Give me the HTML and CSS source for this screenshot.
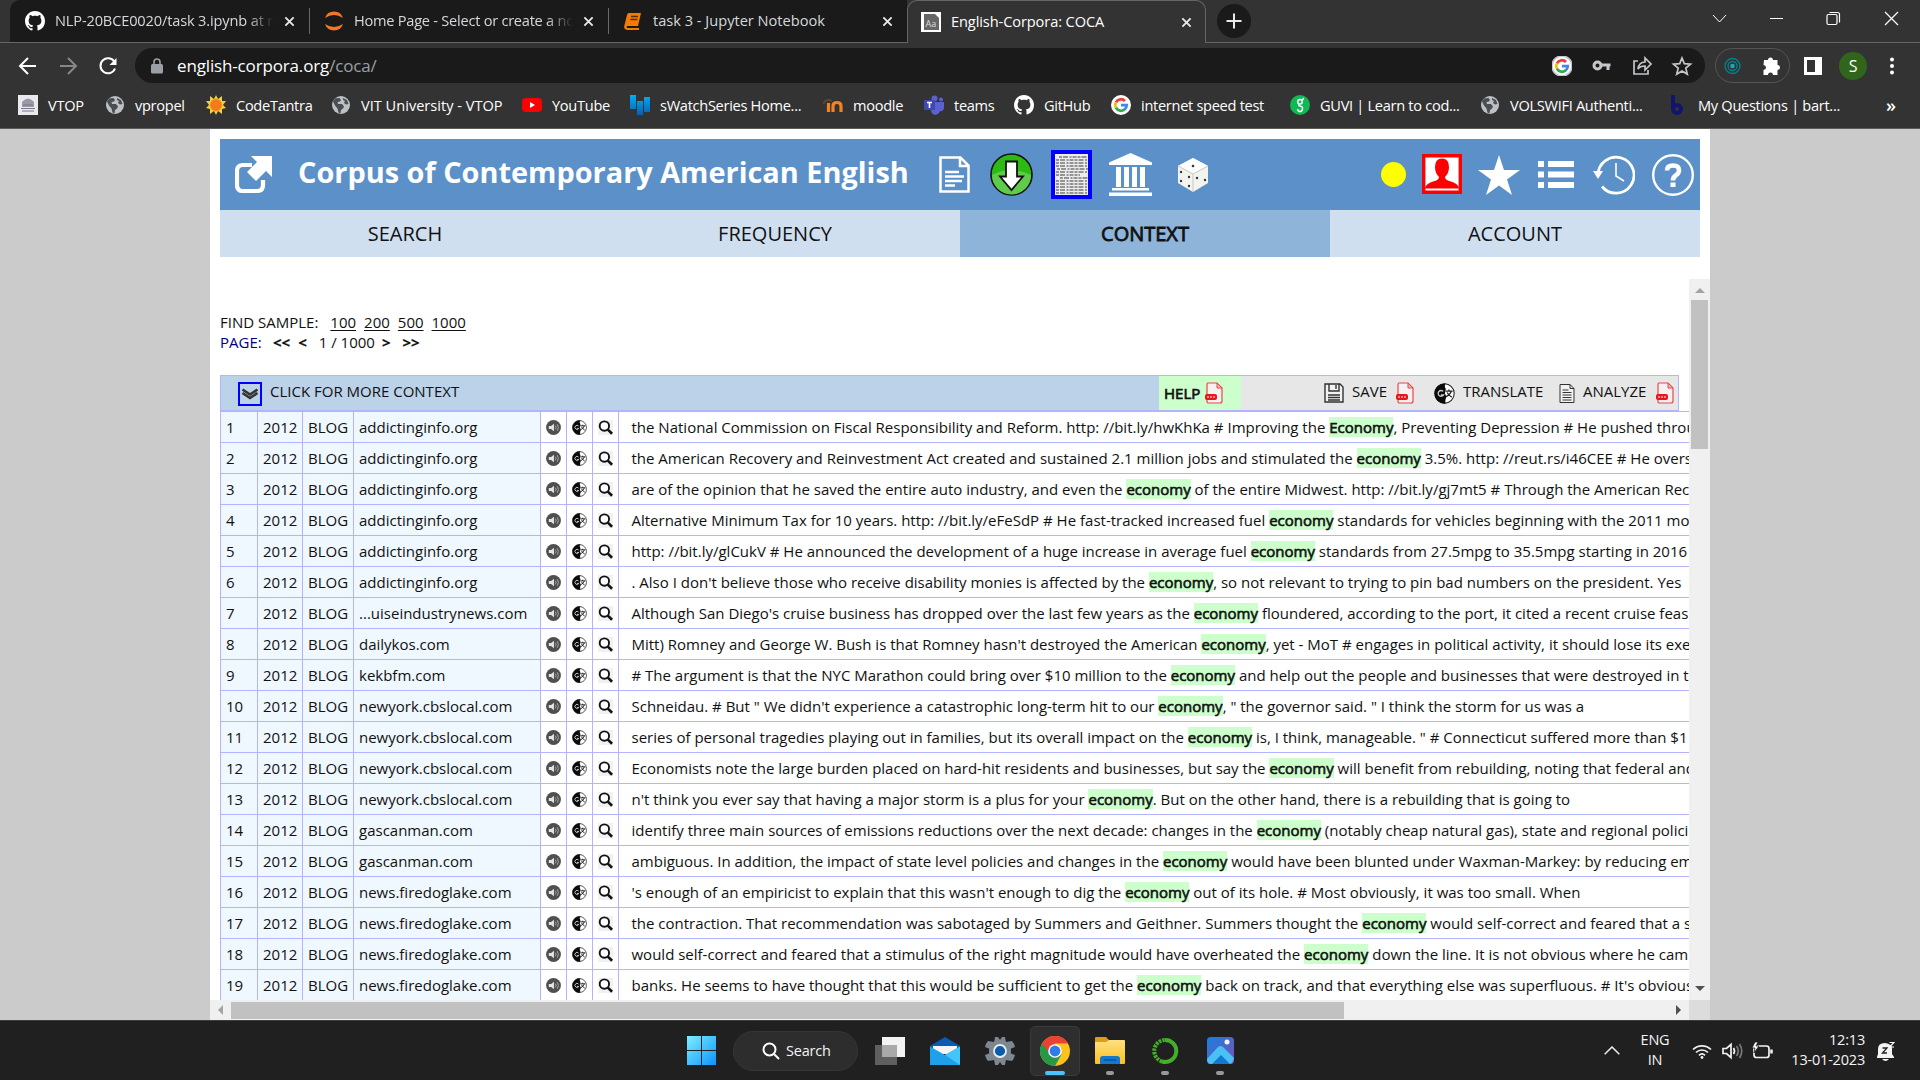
FILE: index.html
```html
<!DOCTYPE html>
<html lang="en">
<head>
<meta charset="utf-8">
<title>English-Corpora: COCA</title>
<link rel="stylesheet" href="styles.css">
</head>
<body>
<svg class="defs" width="0" height="0">
  <defs>
    <linearGradient id="winG" x1="0" y1="0" x2="1" y2="1"><stop offset="0" stop-color="#7df0ff"/><stop offset="1" stop-color="#0c93ff"/></linearGradient>
    <linearGradient id="barG" x1="0" y1="0" x2="0" y2="1"><stop offset="0" stop-color="#00aef5"/><stop offset="1" stop-color="#0b5fb0"/></linearGradient>
    <linearGradient id="foldG" x1="0" y1="0" x2="0" y2="1"><stop offset="0" stop-color="#ffe083"/><stop offset="1" stop-color="#fcc01c"/></linearGradient>
    <linearGradient id="photoG" x1="0" y1="0" x2="1" y2="1"><stop offset="0" stop-color="#1681dd"/><stop offset="1" stop-color="#7d4fb5"/></linearGradient>
  </defs>
  <symbol id="github" viewBox="0 0 16 16"><path fill="#fff" d="M8 0C3.58 0 0 3.58 0 8c0 3.54 2.29 6.53 5.47 7.59.4.07.55-.17.55-.38 0-.19-.01-.82-.01-1.49-2.01.37-2.53-.49-2.69-.94-.09-.23-.48-.94-.82-1.13-.28-.15-.68-.52-.01-.53.63-.01 1.08.58 1.23.82.72 1.21 1.87.87 2.33.66.07-.52.28-.87.51-1.07-1.78-.2-3.64-.89-3.64-3.95 0-.87.31-1.59.82-2.15-.08-.2-.36-1.02.08-2.12 0 0 .67-.21 2.2.82.64-.18 1.32-.27 2-.27s1.36.09 2 .27c1.53-1.04 2.2-.82 2.2-.82.44 1.1.16 1.92.08 2.12.51.56.82 1.27.82 2.15 0 3.07-1.87 3.75-3.65 3.95.29.25.54.73.54 1.48 0 1.07-.01 1.93-.01 2.2 0 .21.15.46.55.38A8.01 8.01 0 0 0 16 8c0-4.42-3.58-8-8-8z"/></symbol>
  <symbol id="globe" viewBox="0 0 20 20"><circle cx="10" cy="10" r="9" fill="#bdc1c6"/><path fill="#4a4d51" d="M4 3.500 8.500 3l1.500 2-1 1.500-2.500.5L7 9h4l2 2.500-1 2-2 1.500-.5 3.500-2-1-1-4-2.500-3L2 6.500zM12 3l4 2 1.500 4-2.500.5-2-1.500 1-2-2-1z"/></symbol>
  <symbol id="google" viewBox="0 0 20 20"><circle cx="10" cy="10" r="10" fill="#fff"/><g fill="none" stroke-width="2.800"><path stroke="#ea4335" d="M4.900 7.300A5.700 5.700 0 0 1 14 6"/><path stroke="#fbbc05" d="M4.900 12.700a5.700 5.700 0 0 1 0-5.400"/><path stroke="#34a853" d="M4.900 12.700A5.700 5.700 0 0 0 14 14.100"/><path stroke="#4285f4" d="M10 10.200h5.700a5.700 5.700 0 0 1-1.900 4"/></g></symbol>
  <symbol id="x" viewBox="0 0 12 12"><path stroke="#e8eaed" stroke-width="2" d="m1.500 1.500 9 9m0-9-9 9"/></symbol>
  <symbol id="snd" viewBox="0 0 16 16"><circle cx="8" cy="8" r="7.900" fill="#4f4f4f"/><path fill="#e4e4e4" d="M3 6.500h2.500L8.500 4v8L5.500 9.500H3z"/><path fill="none" stroke="#aaa" d="M10 6q1.500 2 0 4m2-5.500q2.500 3.500 0 7"/></symbol>
  <symbol id="gt" viewBox="0 0 16 16"><circle cx="8" cy="8" r="7.400" fill="#fff" stroke="#222" stroke-width=".8"/><path fill="#0a0a0a" d="M9 .4A7.700 7.700 0 1 0 9 15.700q-1-2 .5-5.200L8.300 8l.7-3.500Q7.500 2 9 .4z"/><path fill="none" stroke="#ccc" d="M7 6.400a2.200 2.200 0 1 0 .3 2.600H5.300"/><path fill="none" stroke="#222" stroke-width="1" d="M8.800 6.200h5.400m-2.800-1.200v1.200m1.800 0q-1 3-4 4.200m.8-3.200q1 2 3.600 3.600"/></symbol>
  <symbol id="mag" viewBox="0 0 16 16"><path fill="#f1f1f1" d="M0 0h16v16H0z"/><circle cx="6.800" cy="6.500" r="5" fill="#fff" stroke="#111" stroke-width="2"/><path stroke="#111" stroke-width="2.800" d="m10.500 10.300 4.500 4.400"/></symbol>
  <symbol id="pdf" viewBox="0 0 18 22"><path fill="#f6f1f1" stroke="#e84848" stroke-width="1.200" d="M3 1h9l5 5v13q0 2-2 2H3q-1 0-1-2V3q0-2 1-2z"/><path fill="#f3b7b7" stroke="#e84848" d="M12 1v5h5z"/><rect y="12" width="12" height="6" rx="2" fill="#e8151b"/><path stroke="#fff" stroke-width="1" stroke-dasharray="2 1" d="M2 15h8"/></symbol>
</svg>

<div class="browser">
  <div class="tabs">
    <div class="tab"><svg class="ico"><use href="#github"/></svg><span class="tt t1 fade">NLP-20BCE0020/task 3.ipynb at r</span><svg class="cl"><use href="#x"/></svg></div>
    <div class="tab sep"><svg class="ico" viewBox="0 0 20 20"><path fill="#f37726" d="M1 7a9.500 9.500 0 0 1 18 0Q10 1 1 7zM1 13a9.500 9.500 0 0 0 18 0Q10 19 1 13z"/></svg><span class="tt t2 fade">Home Page - Select or create a no</span><svg class="cl"><use href="#x"/></svg></div>
    <div class="tab sep"><svg class="ico" viewBox="0 0 20 20"><path fill="#f57c00" d="M6 2h12l-3 13H4q-1 2 1 2h11v2H4q-4-1-2.500-5L4 4q.5-2 2-2z"/><path stroke="#5a2d00" stroke-width="1.300" d="M8 5.500h7M7.300 8.500h7"/></svg><span class="tt t3">task 3 - Jupyter Notebook</span><svg class="cl"><use href="#x"/></svg></div>
    <div class="tab active"><svg class="ico" viewBox="0 0 20 20"><path fill="#fff" d="M0 0h20v20H0z"/><path fill="#666" d="M3 2h11l4 4v12H3z"/><text x="4.500" y="14.500" class="aa">Aa</text></svg><span class="tt t4">English-Corpora: COCA</span><svg class="cl"><use href="#x"/></svg></div>
    <div class="newtab"><svg width="16" height="16" viewBox="0 0 16 16"><path stroke="#e8eaed" stroke-width="2" d="M8 .5v15M.5 8h15"/></svg></div>
    <svg class="winbtns" width="190" height="20" viewBox="0 0 190 20" fill="none" stroke="#fff" stroke-width="1.200"><path d="m1 6 6.500 7L14 6M58 9.500h13" stroke-width="1"/><rect x="115" y="5.500" width="10" height="10" rx="1.500"/><path d="M117.500 3.500h8q2 0 2 2v8M173 3l13 13m0-13-13 13"/></svg>
  </div>
  <div class="toolbar">
    <svg class="navs" width="100" height="20" viewBox="0 0 100 20" fill="none" stroke-width="2"><path stroke="#fff" d="M18 10H2m8-8-8 8 8 8"/><path stroke="#85878a" d="M42 10h16m-8-8 8 8-8 8"/><path stroke="#fff" d="M96.500 6A7.500 7.500 0 1 0 97 12.500"/><path fill="#fff" d="M98.500 2v7h-7z"/></svg>
    <div class="omni">
      <svg width="12" height="16" viewBox="0 0 12 16"><path fill="#9aa0a6" d="M1.500 6h9Q12 6 12 7.500v6.500q0 1.500-1.500 1.500h-9Q0 15.500 0 14V7.500Q0 6 1.500 6z"/><path fill="none" stroke="#9aa0a6" stroke-width="1.600" d="M3 7V4a3 3 0 0 1 6 0v3"/></svg>
      <span class="url">english-corpora.org<i>/coca/</i></span>
      <svg class="oi" width="142" height="20" viewBox="0 0 142 20" fill="none" stroke="#c4c7ca" stroke-width="1.700"><use href="#google" width="20" height="20"/><circle cx="45.500" cy="9.500" r="3.500" stroke-width="3"/><path stroke-width="3" d="M49 9h9.500m-2.500 0v5"/><path d="M86 5h-4v13h14v-4m-10-1q1-7 7-7V2l6 6-6 6v-4q-5 0-7 3z"/><path d="m130 2 2.300 5.600 6.200.5-4.700 4 1.500 6-5.300-3.200-5.300 3.200 1.500-6-4.700-4 6.200-.5z"/></svg>
    </div>
    <div class="ext"><svg width="60" height="20" viewBox="0 0 60 20"><g fill="none" stroke="#00838f" stroke-width="1.300"><circle cx="9.500" cy="10" r="7.500"/><circle cx="9.500" cy="10" r="4.500"/></g><circle cx="9.500" cy="10" r="2.300" fill="#19a9b5"/><path fill="#fff" d="M41 4h4a2.500 2.500 0 1 1 5 0h4.500v5a2.500 2.500 0 1 1 0 5v5H50a2.500 2.500 0 0 0-5 0h-4.500v-5a2.500 2.500 0 0 0 0-5z"/></svg></div>
    <svg class="panel" width="18" height="18" viewBox="0 0 18 18"><path fill="#fff" fill-rule="evenodd" d="M0 0h18v18H0zM3 3v12h8V3z"/></svg>
    <span class="avatar">S</span>
    <svg class="dots" width="6" height="18" viewBox="0 0 6 18" fill="#fff"><circle cx="3" cy="2.500" r="2"/><circle cx="3" cy="9" r="2"/><circle cx="3" cy="15.500" r="2"/></svg>
  </div>
  <div class="marks">
    <div><svg viewBox="0 0 20 20"><path fill="#e9e9ee" d="M0 0h20v20H0z"/><path fill="#9a9aa6" d="M4 7q6-7 12 0v5H4z"/><path stroke="#77778a" d="M3 13.500h14M4 16h12M5 10h10"/></svg><span>VTOP</span></div>
    <div><svg><use href="#globe"/></svg><span>vpropel</span></div>
    <div><svg viewBox="0 0 20 20"><path fill="#f0d040" d="m10 0 2 4 4-3v5l4 0-3 4 3 3-4 1v5l-4-3-2 4-2-4-4 3v-5l-4-1 3-3-3-4h4V1l4 3z"/><circle cx="10" cy="10" r="6" fill="#f57a1c"/></svg><span>CodeTantra</span></div>
    <div><svg><use href="#globe"/></svg><span class="wide">VIT University - VTOP</span></div>
    <div><svg viewBox="0 0 20 20"><rect y="3" width="20" height="14" rx="4" fill="#f00"/><path fill="#fff" d="m8 7 5 3-5 3z"/></svg><span>YouTube</span></div>
    <div><svg viewBox="0 0 20 20" fill="url(#barG)"><path d="M0 0h6v14H0zM7 6h6v14H7zM14 2h6v15h-6z"/></svg><span>sWatchSeries Home...</span></div>
    <div><svg viewBox="0 0 20 20" fill="none"><path stroke="#f58220" stroke-width="3.200" d="M5.500 8v9M10 17v-6q0-3.500 4-3.500t4 3.500v6"/><path stroke="#5b4636" stroke-width="2" d="M0 9q3-6 9-3"/></svg><span>moodle</span></div>
    <div><svg viewBox="0 0 20 20"><g fill="#5b62d0"><circle cx="10.500" cy="3.500" r="3"/><circle cx="17" cy="4.500" r="2"/><path d="M8 7h12v6q-1 4-4 3-1 3.500-5 4-4-1-4-5z"/></g><path fill="#3f48b5" d="M0 5h11v10H0z"/><path stroke="#fff" stroke-width="1.600" d="M3 7.500h5M5.500 7v6"/></svg><span>teams</span></div>
    <div><svg><use href="#github"/></svg><span>GitHub</span></div>
    <div><svg><use href="#google"/></svg><span>internet speed test</span></div>
    <div><svg viewBox="0 0 20 20"><circle cx="10" cy="10" r="10" fill="#0fb954"/><g fill="none" stroke="#fff" stroke-width="1.500"><circle cx="10" cy="6.800" r="2.300"/><path d="M12 5q2-1 1-2M9 9q-1 1.500 1 2 3 .5 2.500 3T10 16.500 7.500 14"/></g></svg><span>GUVI | Learn to cod...</span></div>
    <div><svg><use href="#globe"/></svg><span>VOLSWIFI Authenti...</span></div>
    <div><svg viewBox="0 0 20 20" fill="none" stroke="#131370" stroke-width="4"><path d="M3 1h2v14"/><ellipse cx="9" cy="14" rx="4" ry="4"/></svg><span>My Questions | bart...</span></div>
    <b>»</b>
  </div>
</div>

<div class="page">
  <header>
    <svg class="h-link" width="37" height="37" viewBox="0 0 37 37"><path fill="none" stroke="#fff" stroke-width="4.200" d="M17 9H8q-6 0-6 6v14q0 6 6 6h14q6 0 6-6v-5"/><path fill="#fff" d="M16 0h21v21l-6-6-10 10-9-9L22 6z"/></svg>
    <h1>Corpus of Contemporary American English</h1>
    <svg class="h-doc" width="31" height="37" viewBox="0 0 31 37" fill="none" stroke="#fff" stroke-width="2.500"><path d="M1.500 1.500h20l8 8v26h-28zM21 1.500V10h8M6 16h14M6 20.500h19M6 25h17M6 29.500h10"/></svg>
    <svg class="h-down" width="43" height="43" viewBox="0 0 43 43"><circle cx="21.500" cy="21.500" r="20.500" fill="#2bbb12" stroke="#111" stroke-width="1.600"/><path fill="#5ecb4a" d="M2 22q19-10 39 0a19.500 19.500 0 0 1-39 0z"/><path fill="#fff" stroke="#111" stroke-width="1.800" d="M16 8.500h11v15h6L21.500 37 10 23.500h6z"/></svg>
    <svg class="h-news" width="41" height="49" viewBox="0 0 41 49"><path fill="#ececec" d="M2 2h37v45H2z"/><path stroke="#777" stroke-width="1.300" stroke-dasharray="3 1 5 1.500 2 1 4 1" d="M8 7h29M5 10h31M5 13h32M5 16h31M6 19h31M5 22h32M5 25h24M9 28h28M5 31h32M5 34h31M5 37h32M5 40h31M5 43h32"/><path fill="none" stroke="#00f" stroke-width="4" d="M2 2h37v45H2z"/></svg>
    <svg class="h-bank" width="43" height="43" viewBox="0 0 43 43" fill="#fff"><path d="M21.500 0 43 9.500V12H0V9.500zM7 14h5v20H7zm8 0h5v20h-5zm8 0h5v20h-5zm8 0h5v20h-5zM3 35h37v2.500H3zM0 39.500h43V43H0z"/></svg>
    <svg class="h-dice" width="32" height="34" viewBox="0 0 32 34"><path fill="#f4f4ee" d="M16 0 31 8v17L16 34 1 25V8z"/><path fill="#fff" d="M16 0 31 8l-15 8L1 8z"/><path fill="none" stroke="#c8c8bc" d="m1 8 15 8 15-8M16 16v18"/><g fill="#334"><circle cx="16" cy="8" r="1.300"/><circle cx="4" cy="14" r="1.200"/><circle cx="12" cy="19" r="1.200"/><circle cx="4" cy="23" r="1.200"/><circle cx="12" cy="28" r="1.200"/><circle cx="20" cy="20" r="1.200"/><circle cx="28" cy="22" r="1.200"/></g></svg>
    <i class="h-dot"></i>
    <svg class="h-user" width="40" height="40" viewBox="0 0 40 40"><path fill="#fff" stroke="red" stroke-width="3.400" d="M1.700 1.700h36.600v36.600H1.700z"/><path fill="red" d="M13 13q0-8.500 7-8.500T27 13q0 6-4 10 0 3 6 4.500 7 2 8 6.500v.5H3V34q1-4.500 8-6.500 6-1.500 6-4.500-4-4-4-10z"/></svg>
    <svg class="h-star" width="42" height="40" viewBox="0 0 42 40"><path fill="#fff" d="m21 0 5 15h16L29 24.500 34 40 21 30.500 8 40l5-15.500L0 15h16z"/></svg>
    <svg class="h-list" width="36" height="27" viewBox="0 0 36 27" fill="#fff"><path d="M0 0h6v6H0zm10 0h26v6H10zM0 10.500h6v6H0zm10 0h26v6H10zM0 21h6v6H0zm10 0h26v6H10z"/></svg>
    <svg class="h-hist" width="42" height="40" viewBox="0 0 42 40"><path fill="none" stroke="#fff" stroke-width="2.800" d="M5 20a18 18 0 1 1 4 11.500"/><path fill="#fff" d="M0 16h10l-5 8z"/><path fill="none" stroke="#fff" stroke-width="1.600" d="M23 8v13l8 5"/></svg>
    <svg class="h-help" width="42" height="42" viewBox="0 0 42 42" fill="none" stroke="#fff"><circle cx="21" cy="21" r="19.800" stroke-width="2.400"/><path stroke-width="4.600" d="M15 16.500q0-5 6-5t6 4.700q0 3-3 5Q21 23 21 26.500"/><path fill="#fff" stroke="none" d="M18.500 28.500h5v4.500h-5z"/></svg>
  </header>
  <nav><span>SEARCH</span><span>FREQUENCY</span><span class="on">CONTEXT</span><span>ACCOUNT</span></nav>
  <div class="frame">
    <div class="view">
      <div class="sample">FIND SAMPLE: <u>100</u><u>200</u><u>500</u><u>1000</u></div>
      <div class="pager"><em>PAGE:</em><b>&lt;&lt;</b><b>&lt;</b><span>1 / 1000</span><b>&gt;</b><b class="last">&gt;&gt;</b></div>
      <div class="thead">
        <div class="more"><svg width="24" height="24" viewBox="0 0 24 24"><path fill="none" stroke="#00f" stroke-width="2" d="M1 1h22v22H1z"/><path fill="none" stroke="#333" stroke-width="2.600" d="m4.500 7.500 7.500 5 7.500-5M4.500 11l7.500 5 7.500-5"/></svg><span>CLICK FOR MORE CONTEXT</span></div>
        <div class="help"><b>HELP</b><svg width="18" height="22"><use href="#pdf"/></svg></div>
        <div class="tools">
          <svg class="a" width="20" height="20" viewBox="0 0 20 20"><path fill="#f2f2f2" stroke="#333" stroke-width="1.400" d="M1 1h15l3 3v15H1z"/><path fill="none" stroke="#333" stroke-width="1.400" d="M5 1v7h10V1m-3 1v4M4 12h12M4 14.500h12M4 17h12"/></svg><span class="s">SAVE</span><svg class="p1" width="18" height="22"><use href="#pdf"/></svg>
          <svg class="t" width="21" height="21"><use href="#gt"/></svg><span class="s s2">TRANSLATE</span>
          <svg class="d" width="16" height="19" viewBox="0 0 16 19"><path fill="#f2f2f2" stroke="#333" d="M1 .5h10l4 4v14H1zM11 .5v4h4M3.500 6h6M3.500 8.500h9M3.500 11h9M3.500 13.500h9M3.500 16h9"/></svg><span class="s s3">ANALYZE</span><svg width="18" height="22"><use href="#pdf"/></svg>
        </div>
      </div>
      <div class="rows">
<div><i>1</i><i>2012</i><i>BLOG</i><i>addictinginfo.org</i><s><svg><use href="#snd"/></svg></s><s><svg><use href="#gt"/></svg></s><s><svg><use href="#mag"/></svg></s><p>the National Commission on Fiscal Responsibility and Reform. http: //bit.ly/hwKhKa # Improving the <b>Economy</b>, Preventing Depression # He pushed through</p></div>
<div><i>2</i><i>2012</i><i>BLOG</i><i>addictinginfo.org</i><s><svg><use href="#snd"/></svg></s><s><svg><use href="#gt"/></svg></s><s><svg><use href="#mag"/></svg></s><p>the American Recovery and Reinvestment Act created and sustained 2.1 million jobs and stimulated the <b>economy</b> 3.5%. http: //reut.rs/i46CEE # He oversaw</p></div>
<div><i>3</i><i>2012</i><i>BLOG</i><i>addictinginfo.org</i><s><svg><use href="#snd"/></svg></s><s><svg><use href="#gt"/></svg></s><s><svg><use href="#mag"/></svg></s><p>are of the opinion that he saved the entire auto industry, and even the <b>economy</b> of the entire Midwest. http: //bit.ly/gj7mt5 # Through the American Recovery</p></div>
<div><i>4</i><i>2012</i><i>BLOG</i><i>addictinginfo.org</i><s><svg><use href="#snd"/></svg></s><s><svg><use href="#gt"/></svg></s><s><svg><use href="#mag"/></svg></s><p>Alternative Minimum Tax for 10 years. http: //bit.ly/eFeSdP # He fast-tracked increased fuel <b>economy</b> standards for vehicles beginning with the 2011 model</p></div>
<div><i>5</i><i>2012</i><i>BLOG</i><i>addictinginfo.org</i><s><svg><use href="#snd"/></svg></s><s><svg><use href="#gt"/></svg></s><s><svg><use href="#mag"/></svg></s><p>http: //bit.ly/glCukV # He announced the development of a huge increase in average fuel <b>economy</b> standards from 27.5mpg to 35.5mpg starting in 2016</p></div>
<div><i>6</i><i>2012</i><i>BLOG</i><i>addictinginfo.org</i><s><svg><use href="#snd"/></svg></s><s><svg><use href="#gt"/></svg></s><s><svg><use href="#mag"/></svg></s><p>. Also I don't believe those who receive disability monies is affected by the <b>economy</b>, so not relevant to trying to pin bad numbers on the president. Yes</p></div>
<div><i>7</i><i>2012</i><i>BLOG</i><i>...uiseindustrynews.com</i><s><svg><use href="#snd"/></svg></s><s><svg><use href="#gt"/></svg></s><s><svg><use href="#mag"/></svg></s><p>Although San Diego's cruise business has dropped over the last few years as the <b>economy</b> floundered, according to the port, it cited a recent cruise feasibility</p></div>
<div><i>8</i><i>2012</i><i>BLOG</i><i>dailykos.com</i><s><svg><use href="#snd"/></svg></s><s><svg><use href="#gt"/></svg></s><s><svg><use href="#mag"/></svg></s><p>Mitt) Romney and George W. Bush is that Romney hasn't destroyed the American <b>economy</b>, yet - MoT # engages in political activity, it should lose its exemption</p></div>
<div><i>9</i><i>2012</i><i>BLOG</i><i>kekbfm.com</i><s><svg><use href="#snd"/></svg></s><s><svg><use href="#gt"/></svg></s><s><svg><use href="#mag"/></svg></s><p># The argument is that the NYC Marathon could bring over $10 million to the <b>economy</b> and help out the people and businesses that were destroyed in the</p></div>
<div><i>10</i><i>2012</i><i>BLOG</i><i>newyork.cbslocal.com</i><s><svg><use href="#snd"/></svg></s><s><svg><use href="#gt"/></svg></s><s><svg><use href="#mag"/></svg></s><p>Schneidau. # But " We didn't experience a catastrophic long-term hit to our <b>economy</b>, " the governor said. " I think the storm for us was a</p></div>
<div><i>11</i><i>2012</i><i>BLOG</i><i>newyork.cbslocal.com</i><s><svg><use href="#snd"/></svg></s><s><svg><use href="#gt"/></svg></s><s><svg><use href="#mag"/></svg></s><p>series of personal tragedies playing out in families, but its overall impact on the <b>economy</b> is, I think, manageable. " # Connecticut suffered more than $1</p></div>
<div><i>12</i><i>2012</i><i>BLOG</i><i>newyork.cbslocal.com</i><s><svg><use href="#snd"/></svg></s><s><svg><use href="#gt"/></svg></s><s><svg><use href="#mag"/></svg></s><p>Economists note the large burden placed on hard-hit residents and businesses, but say the <b>economy</b> will benefit from rebuilding, noting that federal and</p></div>
<div><i>13</i><i>2012</i><i>BLOG</i><i>newyork.cbslocal.com</i><s><svg><use href="#snd"/></svg></s><s><svg><use href="#gt"/></svg></s><s><svg><use href="#mag"/></svg></s><p>n't think you ever say that having a major storm is a plus for your <b>economy</b>. But on the other hand, there is a rebuilding that is going to</p></div>
<div><i>14</i><i>2012</i><i>BLOG</i><i>gascanman.com</i><s><svg><use href="#snd"/></svg></s><s><svg><use href="#gt"/></svg></s><s><svg><use href="#mag"/></svg></s><p>identify three main sources of emissions reductions over the next decade: changes in the <b>economy</b> (notably cheap natural gas), state and regional policies</p></div>
<div><i>15</i><i>2012</i><i>BLOG</i><i>gascanman.com</i><s><svg><use href="#snd"/></svg></s><s><svg><use href="#gt"/></svg></s><s><svg><use href="#mag"/></svg></s><p>ambiguous. In addition, the impact of state level policies and changes in the <b>economy</b> would have been blunted under Waxman-Markey: by reducing emissions</p></div>
<div><i>16</i><i>2012</i><i>BLOG</i><i>news.firedoglake.com</i><s><svg><use href="#snd"/></svg></s><s><svg><use href="#gt"/></svg></s><s><svg><use href="#mag"/></svg></s><p>'s enough of an empiricist to explain that this wasn't enough to dig the <b>economy</b> out of its hole. # Most obviously, it was too small. When</p></div>
<div><i>17</i><i>2012</i><i>BLOG</i><i>news.firedoglake.com</i><s><svg><use href="#snd"/></svg></s><s><svg><use href="#gt"/></svg></s><s><svg><use href="#mag"/></svg></s><p>the contraction. That recommendation was sabotaged by Summers and Geithner. Summers thought the <b>economy</b> would self-correct and feared that a stimulus</p></div>
<div><i>18</i><i>2012</i><i>BLOG</i><i>news.firedoglake.com</i><s><svg><use href="#snd"/></svg></s><s><svg><use href="#gt"/></svg></s><s><svg><use href="#mag"/></svg></s><p>would self-correct and feared that a stimulus of the right magnitude would have overheated the <b>economy</b> down the line. It is not obvious where he cam</p></div>
<div><i>19</i><i>2012</i><i>BLOG</i><i>news.firedoglake.com</i><s><svg><use href="#snd"/></svg></s><s><svg><use href="#gt"/></svg></s><s><svg><use href="#mag"/></svg></s><p>banks. He seems to have thought that this would be sufficient to get the <b>economy</b> back on track, and that everything else was superfluous. # It's obvious</p></div>
      </div>
    </div>
    <div class="vbar"><i class="up"></i><i class="thumb"></i><i class="down"></i></div>
    <div class="hbar"><i class="left"></i><i class="thumb"></i><i class="right"></i></div>
    <div class="corner"></div>
  </div>
</div>

<footer>
  <svg class="w" width="29" height="29" viewBox="0 0 29 29" fill="url(#winG)"><path d="M0 0h14v14H0zM15 0h14v14H15zM0 15h14v14H0zM15 15h14v14H15z"/></svg>
  <div class="search"><svg width="18" height="18" viewBox="0 0 18 18" fill="none" stroke="#fff" stroke-width="2"><circle cx="7.500" cy="7.500" r="6"/><path d="m12 12 5 5"/></svg><span>Search</span></div>
  <div class="app"><svg width="30" height="28" viewBox="0 0 30 28"><path fill="#f3f3f3" d="M7 0h23v20H7z"/><path fill="#5f5f5f" d="M0 8h22v20H0z"/><path fill="#a9a9a9" d="M7 8h15v12H7z"/></svg></div>
  <div class="app"><svg width="30" height="28" viewBox="0 0 30 28"><path fill="#0a5bb5" d="M0 9 15 0l15 9v5H0z"/><path fill="#f5f5f5" d="M3 9h24v8H3z"/><path fill="#1fa1ea" d="M0 9.500 15 18l15-8.500V28H0z"/><path fill="#44c4f8" d="M30 9.500 15 18l15 10z"/></svg></div>
  <div class="app"><svg width="30" height="28" viewBox="0 0 30 28"><g fill="#7d8790"><circle cx="15" cy="14" r="11"/><path d="M11 0h2l2 3 2-3h3l1 6H9l1-6zM11 28h2l2-3 2 3h3l1-6H9l1 6zM3 4l6 1-4 7-5-2q1-4 3-6zM27 4l-6 1 4 7 5-2q-1-4-3-6zM3 24l6-1-4-7-5 2q1 4 3 6zM27 24l-6-1 4-7 5 2q-1 4-3 6z"/></g><circle cx="15" cy="14" r="6" fill="#0b5cab" stroke="#e8eef3" stroke-width="1.800"/></svg></div>
  <div class="app sel"><svg width="30" height="30" viewBox="0 0 30 30"><circle cx="15" cy="15" r="15" fill="#fcc31e"/><path fill="#279847" d="M15 15 2 7.500A15 15 0 0 0 15 30l6.500-11.500z"/><path fill="#e94235" d="M2 7.500a15 15 0 0 1 26 0H15l-6 9z"/><circle cx="15" cy="15" r="6.800" fill="#fff"/><circle cx="15" cy="15" r="5.400" fill="#2f7de9"/></svg><i></i></div>
  <div class="app run"><svg width="30" height="27" viewBox="0 0 30 27"><path fill="#dd9d10" d="M0 1q0-1 1-1h10l3 3h15v8H0z"/><path fill="url(#foldG)" d="M0 5h11l3-2h15q1 0 1 1v22q0 1-1 1H1q-1 0-1-1z"/><path fill="#1478cf" d="M5 27v-5q0-3 3-3h14q3 0 3 3v5z"/><path stroke="#0b4f92" stroke-width="1.300" d="M9 23h12"/></svg><i></i></div>
  <div class="app run"><svg width="28" height="28" viewBox="0 0 28 28" fill="none" stroke="#43b02a"><path stroke-width="4" d="M14 3a11 11 0 1 1-3 21.500"/><path stroke-width="4" stroke-dasharray="2.500 1" d="M11 24.500A11 11 0 0 1 14 3"/></svg><i></i></div>
  <div class="app run"><svg width="27" height="27" viewBox="0 0 27 27"><rect width="27" height="27" rx="3.500" fill="url(#photoG)"/><path fill="#4bc0f5" d="m0 22 11-12q2.500-2 5 0l11 11q-1 5-4 6H4q-4 0-4-5z"/><path fill="#1379cf" d="m5 27 9-9 9 9z"/><circle cx="20" cy="5" r="2.500" fill="#f4f4ff"/></svg><i></i></div>
  <svg class="chev" width="16" height="9" viewBox="0 0 16 9"><path fill="none" stroke="#eee" stroke-width="1.500" d="m.7 8.300 7.300-7.300 7.300 7.300"/></svg>
  <div class="lang">ENG<br>IN</div>
  <svg class="tray" width="82" height="20" viewBox="0 0 82 20" fill="none" stroke="#f2f2f2" stroke-width="1.700"><path d="M1 8.500a13 13 0 0 1 18 0M4 11.500a8.500 8.500 0 0 1 12 0M7 14.300a4.500 4.500 0 0 1 6 0"/><circle cx="10" cy="16.500" r="1.400" fill="#f2f2f2" stroke="none"/><path d="M31 7.500h3.500L39 3.500v13l-4.500-4H31zM41.500 7q2 3 0 6"/><path stroke="#777" d="M44.500 5q3.500 5 0 10M47.500 3q4.500 7 0 14"/><rect x="62" y="5" width="15" height="11.500" rx="2.500"/><path stroke-width="2.500" d="M79.500 8.500v4"/><path fill="#fff" stroke="#202020" stroke-width=".8" d="m63 1-3 6h3l-1 5 5-7h-3l2-4z"/></svg>
  <div class="clock">12:13<br>13-01-2023</div>
  <svg class="bell" width="18" height="20" viewBox="0 0 18 20"><path fill="#f4f4f4" d="M1 8q0-6 7-6 8 1 7 7v4l2 3v1H0v-1l1-3zM5 18h7q-3.500 4-7 0z"/><path fill="none" stroke="#202020" stroke-width="1.300" d="M5.500 7H10l-4.500 5H10"/><path fill="none" stroke="#fff" stroke-width="1.200" d="M12.500 1.500H17L12.500 6H17"/></svg>
</footer>
</body>
</html>
```
FILE: styles.css
```css
* { box-sizing: border-box; }
body { margin: 0; width: 1920px; height: 1080px; overflow: hidden; background: #cbcbcb; font-family: "Open Sans", "Noto Sans", sans-serif; color: #111; display: flex; flex-direction: column; }
svg { display: block; flex: none; }
.defs { position: absolute; }
i, em, s { font-style: normal; text-decoration: none; }

/* browser chrome */
.browser { height: 129px; flex: none; background: #333; border-bottom: 1px solid #5c5c5c; color: #fff; font-size: 14.6px; letter-spacing: -.3px; }
.tabs { height: 43px; display: flex; align-items: stretch; padding-left: 10px; border-bottom: 1px solid #666; }
.tab { width: 299px; height: 42px; background: #1a1a1a; display: flex; align-items: center; padding: 0 14px 0 15px; color: #d6d8da; position: relative; }
.tab:first-child { border-top-left-radius: 10px; }
.tab.sep::before { content: ""; width: 1px; height: 26px; background: #6a6a6a; margin-left: -15px; margin-right: 14px; }
.tab .ico { width: 20px; height: 20px; margin-right: 10px; }
.tab .cl { width: 11px; height: 11px; }
.tt { flex: 1; white-space: nowrap; overflow: hidden; margin: 0 10px 2px 0; }
.t1 { letter-spacing: -.15px; }
.t2 { letter-spacing: -.25px; }
.t3 { letter-spacing: 0; }
.t4 { letter-spacing: -.1px; }
.fade { -webkit-mask-image: linear-gradient(90deg, #000 88%, transparent 100%); mask-image: linear-gradient(90deg, #000 88%, transparent 100%); }
.tab.active { background: #333; height: 43px; border: 1px solid #666; border-bottom: 0; border-radius: 10px 10px 0 0; color: #fff; padding: 0 13px; }
.aa { font: 9px "Open Sans", sans-serif; fill: #ddd; letter-spacing: 0; }
.newtab { width: 34px; height: 34px; border-radius: 50%; background: #1a1a1a; margin: 4px 0 0 11px; display: grid; place-items: center; }
.winbtns { margin: 9px 18px 0 auto; }
.toolbar { height: 45px; display: flex; align-items: center; padding-left: 18px; }
.navs { margin-right: 17px; }
.omni { width: 1570px; height: 35px; border-radius: 18px; background: #1a1a1a; display: flex; align-items: center; padding: 0 11px 0 16px; font-size: 17px; letter-spacing: -.15px; }
.url { margin-left: 14px; flex: 1; line-height: 22px; }
.url i { color: #9aa0a6; }
.ext { margin-left: 10px; width: 75px; height: 35px; border: 1px solid #555; border-radius: 18px; display: flex; align-items: center; padding-left: 7px; }
.panel { margin-left: 14px; }
.avatar { margin-left: 17px; width: 28px; height: 28px; border-radius: 50%; background: #2f661b; display: grid; place-items: center; font-size: 16px; }
.dots { margin-left: 22px; }
.marks { height: 34px; display: grid; grid-template-columns: 87px 101px 125px 191px 108px 193px 101px 90px 97px 179px 190px 188px 218px 20px; padding-left: 18px; align-items: center; }
.marks div { display: flex; align-items: center; white-space: nowrap; }
.marks div svg { width: 20px; height: 20px; margin-right: 10px; }
.marks .wide { letter-spacing: 0; }
.marks b { font-size: 18px; font-weight: 600; }

/* site */
.page { width: 1500px; height: 891px; flex: none; margin: 0 auto; background: #fff; padding-top: 10px; }
header { height: 71px; margin: 0 10px; background: #5b91c8; display: flex; align-items: center; padding: 0 6px 0 15px; }
h1 { margin: 0 0 6px 26px; width: 610px; font-size: 28.9px; line-height: 40px; color: #fff; white-space: nowrap; }
.h-doc { margin-left: 31px; }
.h-down { margin-left: 20px; }
.h-news { margin-left: 18px; }
.h-bank { margin-left: 17px; }
.h-dice { margin-left: 25px; }
.h-dot { margin-left: auto; width: 25px; height: 25px; border-radius: 50%; background: #ff0; }
.h-user { margin-left: 16px; margin-bottom: 1px; }
.h-star { margin-left: 16px; }
.h-list { margin-left: 18px; }
.h-hist { margin-left: 19px; }
.h-help { margin-left: 17px; }
nav { height: 47px; margin: 0 10px; display: grid; grid-template-columns: repeat(4, 1fr); background: #d0dff0; font-size: 20px; line-height: 47px; text-align: center; }
nav .on { background: #8fb4da; -webkit-text-stroke: .8px #111; }

.frame { margin-top: 22px; height: 741px; display: grid; grid-template: 721px 20px / 1479px 21px; }
.view { overflow: hidden; padding: 33px 0 0 10px; font-size: 15px; white-space: nowrap; }
.sample, .pager { height: 20px; line-height: 20px; display: flex; }
.sample u { margin-left: 8px; text-underline-offset: 2px; }
.sample u:first-of-type { margin-left: 12px; }
.pager em { color: #000080; width: 53px; }
.pager b { margin-right: 8px; -webkit-text-stroke: .2px; }
.pager span { margin: 0 7px 0 4px; }
.pager .last { margin-left: 4px; }
.thead { width: 1459px; height: 36px; margin-top: 23px; border: 1px solid #b3b3ff; display: flex; background: #bbd2e8; }
.more { width: 938px; display: flex; align-items: center; padding: 0 0 2px 17px; }
.more svg { margin: 3px 8px 0 0; }
.more span { margin-bottom: 2px; }
.help { width: 82px; background: #cfc; display: flex; align-items: center; padding-left: 5px; }
.help b { font-weight: 400; -webkit-text-stroke: .7px #111; width: 41px; margin-bottom: 1px; }
.tools { flex: 1; background: #e7e7e7; display: flex; align-items: center; padding-left: 83px; }
.s { width: 44px; margin: -5px 0 0 8px; }
.s2 { width: 88px; }
.s3 { width: 73px; }
.t { margin-left: 20px; }
.d { margin-left: 8px; }
.rows { border-top: 1px solid #b3b3ff; border-left: 1px solid #b3b3ff; width: 1900px; }
.rows > div { display: grid; grid-template-columns: 37px 45px 51px 187px 26px 26px 26px 1fr; height: 31px; border-bottom: 1px solid #b3b3ff; line-height: 30px; }
.rows i { background: #f0f8ff; border-right: 1px solid #b3b3ff; padding-left: 5px; }
.rows s { border-right: 1px solid #b3b3ff; display: grid; place-items: center; }
.rows svg { width: 15px; height: 15px; }
.rows p { margin: 0; padding-left: 12.5px; }
.rows p b { font-weight: 400; background: #cfc; -webkit-text-stroke: .6px #111; }

.vbar, .hbar { background: #f0f0f0; display: flex; }
.vbar { flex-direction: column; align-items: center; }
.vbar .thumb { width: 17px; height: 149px; background: #c1c1c1; margin-top: 7px; }
.up { margin-top: 9px; border: 5px solid transparent; border-top: 0; border-bottom: 5px solid #a3a3a3; }
.down { margin: auto 0 9px; border: 5px solid transparent; border-bottom: 0; border-top: 5px solid #505050; }
.hbar { align-items: center; }
.left { margin-left: 8px; border: 5px solid transparent; border-left: 0; border-right: 5px solid #a3a3a3; }
.hbar .thumb { width: 1113px; height: 17px; background: #c1c1c1; margin-left: 8px; }
.right { margin: 0 8px 0 auto; border: 5px solid transparent; border-right: 0; border-left: 5px solid #505050; }
.corner { background: #dcdcdc; }

/* taskbar */
footer { height: 60px; flex: none; background: #202020; border-top: 1px solid #3d3d3d; display: flex; align-items: center; padding-left: 687px; color: #f4f4f4; letter-spacing: -.2px; }
.search { width: 125px; height: 40px; margin: 0 4px 0 17px; border-radius: 20px; background: #2d2d2d; border: 1px solid #353535; display: flex; align-items: center; padding-left: 28px; font-size: 14.5px; gap: 6px; }
.app { width: 50px; height: 50px; margin: 0 1px 0 4px; display: flex; justify-content: center; align-items: center; position: relative; border-radius: 5px; }
.sel { background: #2e2e2e; border: 1px solid #3a3a3a; }
.search + .app { margin-left: 3px; }
.app i { position: absolute; bottom: 1px; width: 8px; height: 4px; border-radius: 2px; background: #999; }
.sel i { width: 20px; background: #4cc2ff; bottom: 0; }
.chev { margin-left: 358px; }
.lang { width: 70px; text-align: center; font-size: 14.5px; line-height: 20px; margin-bottom: 1px; }
.tray { margin-left: 2px; }
.clock { width: 91px; text-align: right; font-size: 14.5px; line-height: 20px; margin-bottom: 2px; }
.bell { margin-left: 12px; }
```
